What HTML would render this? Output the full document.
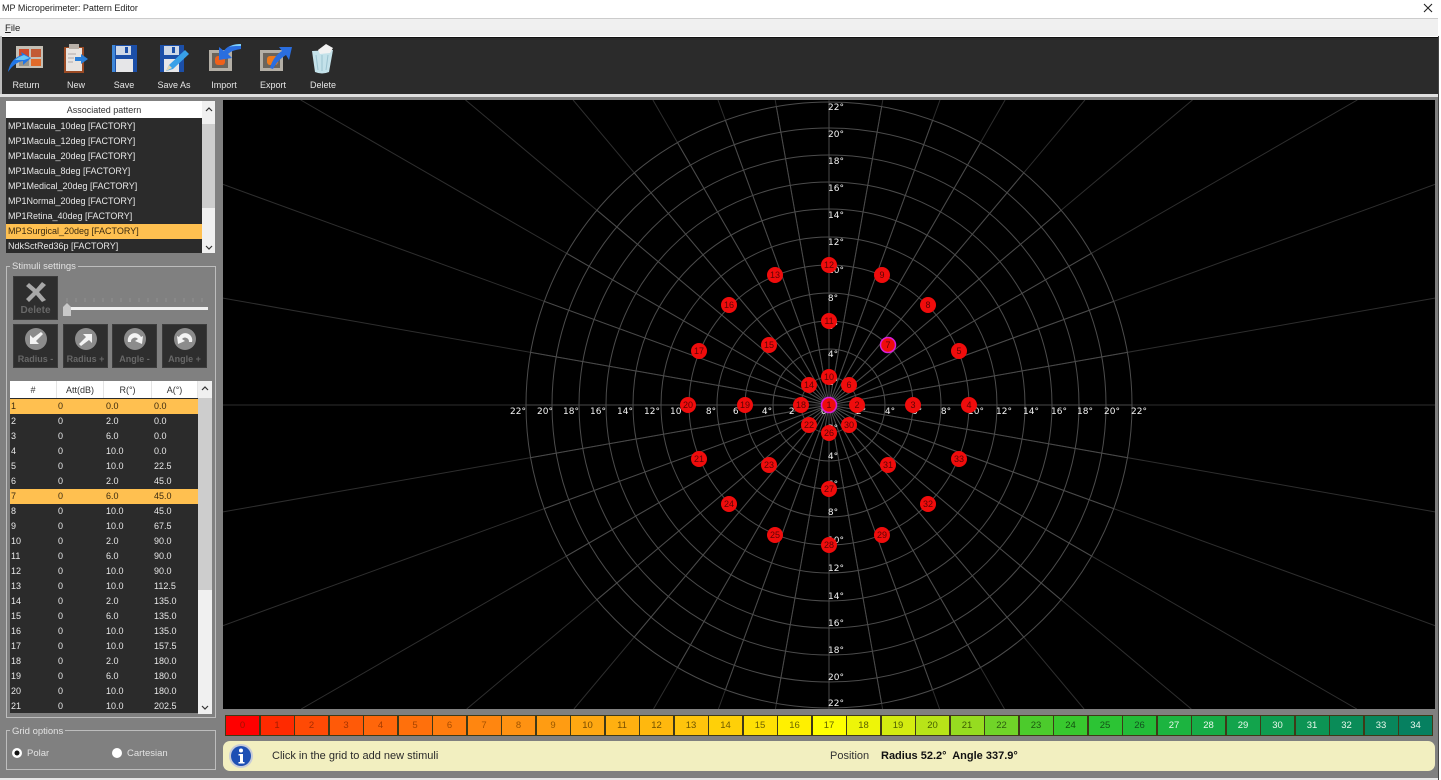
<!DOCTYPE html>
<html><head><meta charset="utf-8"><style>
html,body{margin:0;padding:0;overflow:hidden;width:1441px;height:780px}
body{background:#fff;position:relative;font-family:"Liberation Sans",sans-serif;font-size:9px}
#w{position:absolute;left:0;top:0;width:1441px;height:780px;overflow:hidden}
.a{position:absolute}
.tl{position:absolute;top:80px;color:#e6e6e6;font-size:9px;width:60px;text-align:center;line-height:10px}
.li{position:absolute;left:6px;width:196px;height:15px;line-height:15px;color:#e8e8e8;background:#2b2b2b;padding-left:2px;box-sizing:border-box;white-space:nowrap;overflow:hidden}
.li.s{background:#ffc050;color:#3a2a10}
.r{position:absolute;left:10px;width:188px;height:15px;line-height:15px;background:#2b2b2b;color:#e8e8e8}
.r.s{background:#ffc050;color:#3a2a10}
.r span{position:absolute}
.r span:nth-child(1){left:1px}.r span:nth-child(2){left:48px}.r span:nth-child(3){left:96px}.r span:nth-child(4){left:144px}
.th{position:absolute;top:381px;height:17px;line-height:18px;text-align:center;color:#333;background:#fff;border-right:1px solid #e4e4e4;box-sizing:border-box}
.btn{position:absolute;background:#2e2e2e;border:1px solid #3c3c3c;box-sizing:border-box;width:45px;height:44px}
.bl{position:absolute;left:0;right:0;text-align:center;color:#686868;font-weight:bold;font-size:9px;line-height:10px}
.gb{position:absolute;border:1px solid #bdbdbd;box-sizing:border-box}
.lg{position:absolute;background:#808080;color:#e2e2e2;padding:0 2px;line-height:10px;font-size:9.5px}
.c{position:absolute;top:715px;height:21px;line-height:20px;text-align:center;font-size:9.5px;box-sizing:border-box;border:1px solid #3f3a18;width:35px}
.sb{position:absolute;background:#f0f0f0}
</style></head><body><div id="w">
<div class="a" style="left:2px;top:3px;font-size:9px;line-height:11px;color:#222">MP Microperimeter: Pattern Editor</div>
<svg class="a" style="left:1422px;top:2px" width="12" height="12"><path d="M2 2L10 10M10 2L2 10" stroke="#222" stroke-width="1.1"/></svg>
<div class="a" style="left:0;top:18px;width:1438px;height:18px;background:#f0f0f0;border-top:1px solid #ccc;box-sizing:border-box"></div>
<div class="a" style="left:5px;top:23px;font-size:9.5px;line-height:11px;color:#222"><u>F</u>ile</div>
<div class="a" style="left:2px;top:37px;width:1436px;height:57px;background:#2b2b2b;border-top:1px solid #111"></div>
<div class="a" style="left:0;top:36px;width:2px;height:58px;background:#bbb"></div>
<div class="a" style="left:0;top:94px;width:1438px;height:3px;background:#e0e0e0"></div>
<div class="a" style="left:0;top:97px;width:1438px;height:681px;background:#808080"></div>
<div class="a" style="left:0;top:778px;width:1438px;height:2px;background:#e8e8e8"></div>
<div class="a" style="left:1438px;top:36px;width:1px;height:744px;background:#444"></div>

<!-- toolbar icons -->
<svg class="a" style="left:0;top:38px;filter:blur(.35px)" width="345" height="40" viewBox="0 38 345 40">
 <rect x="16" y="46" width="27" height="22" fill="#c4bfb5"/>
 <rect x="19" y="49" width="10" height="8" fill="#cf4a2a"/><rect x="31" y="49" width="10" height="8" fill="#c25a34"/>
 <rect x="19" y="59" width="10" height="7" fill="#9a958a"/><rect x="31" y="59" width="10" height="7" fill="#e06a2a"/>
 <path d="M8 72C10 62 15 57 22 55L21 52L31 58L23 65L23 61C17 62 12 66 8 72Z" fill="#2276e6"/>
 <path d="M15 60C18 57 22 56 24 55L30 58L24 60Z" fill="#6cc8f4"/>

 <rect x="64" y="47" width="20" height="26" fill="#9a4a24"/><rect x="66" y="48" width="16" height="23" fill="#e8e4e0"/>
 <rect x="69" y="44" width="10" height="5" fill="#b8b0a8"/>
 <path d="M68 54h8M68 58h6M68 62h5" stroke="#b0a8a8"/>
 <path d="M75 57h6v-3l7 5-7 5v-3h-6z" fill="#2a7fd8"/>

 <rect x="112" y="45" width="25" height="27" fill="#1c4fa8"/><rect x="116" y="46" width="15" height="9" fill="#cfd8e6"/><rect x="125" y="47" width="3" height="6" fill="#1c4fa8"/>
 <rect x="116" y="59" width="17" height="13" fill="#e6e6e8"/><rect x="112" y="45" width="3" height="27" fill="#3f87d8"/>

 <rect x="160" y="45" width="24" height="27" fill="#1c4fa8"/><rect x="164" y="46" width="15" height="9" fill="#cfd8e6"/><rect x="172" y="47" width="3" height="6" fill="#1c4fa8"/>
 <rect x="164" y="59" width="15" height="13" fill="#e6e6e8"/>
 <path d="M166 71l3-6 16-15 4 4-16 15z" fill="#38a0e8"/><path d="M166 71l3-6 3 3z" fill="#e8d8b0"/>

 <rect x="209" y="50" width="23" height="21" fill="#b4afa6"/><rect x="212" y="53" width="16" height="15" fill="#6a645c"/><rect x="215" y="56" width="10" height="9" rx="3" fill="#f0601a"/>
 <path d="M241 44C232 44 226 47 224 51L219 47L219 60L232 58L228 54C231 51 235 50 241 49Z" fill="#2a6ee0"/>
 <path d="M229 47C232 45 236 44 241 44V46C236 46 232 46 229 47Z" fill="#7fd0f8"/>

 <rect x="260" y="50" width="23" height="21" fill="#b4afa6"/><rect x="263" y="53" width="17" height="15" fill="#6a645c"/><rect x="267" y="56" width="11" height="9" rx="3" fill="#f07a1a"/>
 <path d="M270 68C272 60 277 54 282 51L279 47L292 47L289 60L286 55C281 58 276 63 273 69Z" fill="#2a6ee0"/>

 <path d="M312 51L333 50L329 72Q322 75 315 72Z" fill="#c4e2ea"/>
 <path d="M316 55l2 15M322 55v16M328 55l-2 15" stroke="#9cc4d0" stroke-width="1"/>
 <path d="M318 50L326 44L333 48L330 53L320 54Z" fill="#f2f2f2"/>
</svg>
<div class="tl" style="left:-4px">Return</div>
<div class="tl" style="left:46px">New</div>
<div class="tl" style="left:94px">Save</div>
<div class="tl" style="left:144px">Save As</div>
<div class="tl" style="left:194px">Import</div>
<div class="tl" style="left:243px">Export</div>
<div class="tl" style="left:293px">Delete</div>

<!-- pattern list -->
<div class="a" style="left:6px;top:101px;width:196px;height:17px;line-height:18px;background:#fff;text-align:center;color:#333">Associated pattern</div>
<div class="a" style="left:6px;top:118px;width:196px;height:135px;background:#2b2b2b"></div>
<div class="li" style="top:119px">MP1Macula_10deg [FACTORY]</div>
<div class="li" style="top:134px">MP1Macula_12deg [FACTORY]</div>
<div class="li" style="top:149px">MP1Macula_20deg [FACTORY]</div>
<div class="li" style="top:164px">MP1Macula_8deg [FACTORY]</div>
<div class="li" style="top:179px">MP1Medical_20deg [FACTORY]</div>
<div class="li" style="top:194px">MP1Normal_20deg [FACTORY]</div>
<div class="li" style="top:209px">MP1Retina_40deg [FACTORY]</div>
<div class="li s" style="top:224px">MP1Surgical_20deg [FACTORY]</div>
<div class="li" style="top:239px;height:14px">NdkSctRed36p [FACTORY]</div>
<div class="sb" style="left:202px;top:101px;width:13px;height:152px"></div>
<div class="a" style="left:202px;top:124px;width:13px;height:84px;background:#cdcdcd"></div>
<svg class="a" style="left:202px;top:101px" width="13" height="152"><path d="M4 10l3-3 3 3M4 145l3 3 3-3" fill="none" stroke="#333" stroke-width="1.2"/></svg>

<!-- stimuli -->
<div class="gb" style="left:6px;top:266px;width:210px;height:452px"></div>
<div class="lg" style="left:10px;top:262px">Stimuli settings</div>
<div class="btn" style="left:13px;top:276px"><svg class="a" style="left:9px;top:4px" width="26" height="22"><path d="M6 2L13 8L19 1L23 4L16 11L23 19L19 21L13 14L6 21L3 18L10 11L3 5Z" fill="#a8a8a8"/></svg><div class="bl" style="top:29px;font-size:10px">Delete</div></div>
<svg class="a" style="left:62px;top:296px" width="150" height="22">
 <path d="M5 2v4M14 2v4M23 2v4M32 2v4M41 2v4M50 2v4M59 2v4M68 2v4M77 2v4M86 2v4M95 2v4M104 2v4M113 2v4M122 2v4M131 2v4M140 2v4" stroke="#8f8f8f" stroke-width="1"/>
 <rect x="3" y="11" width="143" height="3" fill="#f0f0f0"/>
 <path d="M1 11L5 7L9 11V20H1Z" fill="#c8c8c8"/>
</svg>
<div class="btn" style="left:13px;top:324px"><svg class="a" style="left:10px;top:2px" width="24" height="24"><circle cx="12" cy="12" r="11" fill="#8c8c8c"/><path d="M17 5L19 7L12 14L15 17H6V8L9 11Z" fill="#f4f4f4"/></svg><div class="bl" style="top:29px">Radius -</div></div>
<div class="btn" style="left:63px;top:324px"><svg class="a" style="left:10px;top:2px" width="24" height="24"><circle cx="12" cy="12" r="11" fill="#8c8c8c"/><path d="M7 19L5 17L12 10L9 7H18V16L15 13Z" fill="#f4f4f4"/></svg><div class="bl" style="top:29px">Radius +</div></div>
<div class="btn" style="left:112px;top:324px"><svg class="a" style="left:10px;top:2px" width="24" height="24"><circle cx="12" cy="12" r="11" fill="#8c8c8c"/><path d="M5 15A7 7 0 0 1 18 10L20 9L19 17L12 14L15 12A4 4 0 0 0 8 15Z" fill="#f4f4f4"/></svg><div class="bl" style="top:29px">Angle -</div></div>
<div class="btn" style="left:162px;top:324px"><svg class="a" style="left:10px;top:2px" width="24" height="24"><circle cx="12" cy="12" r="11" fill="#8c8c8c"/><path d="M19 15A7 7 0 0 0 6 10L4 9L5 17L12 14L9 12A4 4 0 0 1 16 15Z" fill="#f4f4f4"/></svg><div class="bl" style="top:29px">Angle +</div></div>

<!-- table -->
<div class="th" style="left:10px;width:47px">#</div>
<div class="th" style="left:57px;width:47px">Att(dB)</div>
<div class="th" style="left:104px;width:48px">R(°)</div>
<div class="th" style="left:152px;width:46px">A(°)</div>
<div class="a" style="left:10px;top:398px;width:188px;height:315px;background:#2b2b2b"></div>
<div class="r s" style="top:399px"><span>1</span><span>0</span><span>0.0</span><span>0.0</span></div>
<div class="r" style="top:414px"><span>2</span><span>0</span><span>2.0</span><span>0.0</span></div>
<div class="r" style="top:429px"><span>3</span><span>0</span><span>6.0</span><span>0.0</span></div>
<div class="r" style="top:444px"><span>4</span><span>0</span><span>10.0</span><span>0.0</span></div>
<div class="r" style="top:459px"><span>5</span><span>0</span><span>10.0</span><span>22.5</span></div>
<div class="r" style="top:474px"><span>6</span><span>0</span><span>2.0</span><span>45.0</span></div>
<div class="r s" style="top:489px"><span>7</span><span>0</span><span>6.0</span><span>45.0</span></div>
<div class="r" style="top:504px"><span>8</span><span>0</span><span>10.0</span><span>45.0</span></div>
<div class="r" style="top:519px"><span>9</span><span>0</span><span>10.0</span><span>67.5</span></div>
<div class="r" style="top:534px"><span>10</span><span>0</span><span>2.0</span><span>90.0</span></div>
<div class="r" style="top:549px"><span>11</span><span>0</span><span>6.0</span><span>90.0</span></div>
<div class="r" style="top:564px"><span>12</span><span>0</span><span>10.0</span><span>90.0</span></div>
<div class="r" style="top:579px"><span>13</span><span>0</span><span>10.0</span><span>112.5</span></div>
<div class="r" style="top:594px"><span>14</span><span>0</span><span>2.0</span><span>135.0</span></div>
<div class="r" style="top:609px"><span>15</span><span>0</span><span>6.0</span><span>135.0</span></div>
<div class="r" style="top:624px"><span>16</span><span>0</span><span>10.0</span><span>135.0</span></div>
<div class="r" style="top:639px"><span>17</span><span>0</span><span>10.0</span><span>157.5</span></div>
<div class="r" style="top:654px"><span>18</span><span>0</span><span>2.0</span><span>180.0</span></div>
<div class="r" style="top:669px"><span>19</span><span>0</span><span>6.0</span><span>180.0</span></div>
<div class="r" style="top:684px"><span>20</span><span>0</span><span>10.0</span><span>180.0</span></div>
<div class="r" style="top:699px;height:14px"><span>21</span><span>0</span><span>10.0</span><span>202.5</span></div>
<div class="sb" style="left:198px;top:381px;width:14px;height:333px"></div>
<div class="a" style="left:198px;top:398px;width:14px;height:192px;background:#cdcdcd"></div>
<svg class="a" style="left:198px;top:381px" width="14" height="333"><path d="M4 9l3-3 3 3M4 325l3 3 3-3" fill="none" stroke="#333" stroke-width="1.2"/></svg>

<!-- grid options -->
<div class="gb" style="left:6px;top:730px;width:210px;height:40px"></div>
<div class="lg" style="left:10px;top:727px">Grid options</div>
<svg class="a" style="left:10px;top:746px" width="120" height="14"><circle cx="7" cy="7" r="5" fill="#fff"/><circle cx="7" cy="7" r="2.5" fill="#111"/><circle cx="107" cy="7" r="5" fill="#fff"/></svg>
<div class="a" style="left:27px;top:749px;color:#e2e2e2;line-height:10px;font-size:9.5px">Polar</div>
<div class="a" style="left:127px;top:749px;color:#e2e2e2;line-height:10px;font-size:9.5px">Cartesian</div>

<!-- canvas -->
<svg class="a" style="left:223px;top:100px;background:#000" width="1212" height="609" viewBox="223 100 1212 609">
<defs>
<clipPath id="cp"><circle cx="829" cy="405" r="303"/></clipPath>
<path id="sp" fill="none" d="M223 405L1435 405M223 298.100L1435 511.900M223 511.900L1435 298.100M223 184.400L1435 625.600M223 625.600L1435 184.400M300.700 100L1356.800 709M1357.300 100L301.200 709M465.500 100L1191.300 709M1192.500 100L466.700 709M573.100 100L1084.100 709M1084.900 100L573.900 709M652.900 100L1004.500 709M1005.100 100L653.500 709M718 100L939.600 709M940 100L718.400 709M775.200 100L882.600 709M882.800 100L775.400 709M829 100L829 709"/>
</defs>
<use href="#sp" stroke="#2e2e2e" stroke-width="1"/>
<g clip-path="url(#cp)"><use href="#sp" stroke="#4a4a4a" stroke-width="1"/></g>
<g fill="none" stroke="#4c4c4c" stroke-width="1">
<circle cx="829" cy="405" r="28"/><circle cx="829" cy="405" r="56"/><circle cx="829" cy="405" r="84"/><circle cx="829" cy="405" r="112"/><circle cx="829" cy="405" r="140"/><circle cx="829" cy="405" r="168"/><circle cx="829" cy="405" r="196"/><circle cx="829" cy="405" r="223"/><circle cx="829" cy="405" r="250"/><circle cx="829" cy="405" r="277"/><circle cx="829" cy="405" r="303"/>
</g>
<g font-family="'DejaVu Sans',sans-serif" font-size="9" fill="#f2f2f2" text-anchor="middle">
<text x="836" y="110">22°</text><text x="836" y="137">20°</text><text x="836" y="164">18°</text><text x="836" y="191">16°</text><text x="836" y="218">14°</text><text x="836" y="245">12°</text><text x="836" y="273">10°</text><text x="833" y="301">8°</text><text x="833" y="329">6°</text><text x="833" y="357">4°</text><text x="833" y="385">2°</text>
<text x="833" y="431">2°</text><text x="833" y="459">4°</text><text x="833" y="487">6°</text><text x="833" y="515">8°</text><text x="836" y="543">10°</text><text x="836" y="571">12°</text><text x="836" y="599">14°</text><text x="836" y="626">16°</text><text x="836" y="653">18°</text><text x="836" y="680">20°</text><text x="836" y="706">22°</text>
<text x="518" y="414">22°</text><text x="545" y="414">20°</text><text x="571" y="414">18°</text><text x="598" y="414">16°</text><text x="625" y="414">14°</text><text x="652" y="414">12°</text><text x="678" y="414">10°</text><text x="711" y="414">8°</text><text x="738" y="414">6°</text><text x="767" y="414">4°</text><text x="794" y="414">2°</text><text x="826" y="414">0°</text>
<text x="861" y="414">2°</text><text x="890" y="414">4°</text><text x="917" y="414">6°</text><text x="946" y="414">8°</text><text x="976" y="414">10°</text><text x="1004" y="414">12°</text><text x="1031" y="414">14°</text><text x="1059" y="414">16°</text><text x="1085" y="414">18°</text><text x="1112" y="414">20°</text><text x="1139" y="414">22°</text>
</g>
<g fill="#f00c0c">
<circle cx="829" cy="405" r="7.500" stroke="#d81fd8" stroke-width="1.500"/><circle cx="857" cy="405" r="8"/><circle cx="913" cy="405" r="8"/><circle cx="969" cy="405" r="8"/><circle cx="959" cy="351" r="8"/><circle cx="849" cy="385" r="8"/><circle cx="888" cy="345" r="7.500" stroke="#d81fd8" stroke-width="1.500"/><circle cx="928" cy="305" r="8"/><circle cx="882" cy="275" r="8"/><circle cx="829" cy="377" r="8"/><circle cx="829" cy="321" r="8"/><circle cx="829" cy="265" r="8"/><circle cx="775" cy="275" r="8"/><circle cx="809" cy="385" r="8"/><circle cx="769" cy="345" r="8"/><circle cx="729" cy="305" r="8"/><circle cx="699" cy="351" r="8"/><circle cx="801" cy="405" r="8"/><circle cx="745" cy="405" r="8"/><circle cx="688" cy="405" r="8"/><circle cx="699" cy="459" r="8"/><circle cx="809" cy="425" r="8"/><circle cx="769" cy="465" r="8"/><circle cx="729" cy="504" r="8"/><circle cx="775" cy="535" r="8"/><circle cx="829" cy="433" r="8"/><circle cx="829" cy="489" r="8"/><circle cx="829" cy="545" r="8"/><circle cx="882" cy="535" r="8"/><circle cx="849" cy="425" r="8"/><circle cx="888" cy="465" r="8"/><circle cx="928" cy="504" r="8"/><circle cx="959" cy="459" r="8"/>
</g>
<g font-family="'Liberation Sans',sans-serif" font-size="9" fill="#5c0404" text-anchor="middle">
<text x="829" y="408">1</text><text x="857" y="408">2</text><text x="913" y="408">3</text><text x="969" y="408">4</text><text x="959" y="354">5</text><text x="849" y="388">6</text><text x="888" y="348">7</text><text x="928" y="308">8</text><text x="882" y="278">9</text><text x="829" y="380">10</text><text x="829" y="324">11</text><text x="829" y="268">12</text><text x="775" y="278">13</text><text x="809" y="388">14</text><text x="769" y="348">15</text><text x="729" y="308">16</text><text x="699" y="354">17</text><text x="801" y="408">18</text><text x="745" y="408">19</text><text x="688" y="408">20</text><text x="699" y="462">21</text><text x="809" y="428">22</text><text x="769" y="468">23</text><text x="729" y="507">24</text><text x="775" y="538">25</text><text x="829" y="436">26</text><text x="829" y="492">27</text><text x="829" y="548">28</text><text x="882" y="538">29</text><text x="849" y="428">30</text><text x="888" y="468">31</text><text x="928" y="507">32</text><text x="959" y="462">33</text>
</g>
</svg>

<!-- legend -->
<div class="c" style="left:225px;background:#ff0000;color:#a01000">0</div>
<div class="c" style="left:259.5px;background:#ff2a00;color:#a01c00">1</div>
<div class="c" style="left:294px;background:#ff4a05;color:#a82c00">2</div>
<div class="c" style="left:328.5px;background:#ff5a08;color:#a83400">3</div>
<div class="c" style="left:363px;background:#ff660a;color:#a83c00">4</div>
<div class="c" style="left:397.5px;background:#ff700c;color:#a84400">5</div>
<div class="c" style="left:432px;background:#ff7c0e;color:#a84c00">6</div>
<div class="c" style="left:466.5px;background:#ff8610;color:#a45000">7</div>
<div class="c" style="left:501px;background:#ff9212;color:#a05400">8</div>
<div class="c" style="left:535.5px;background:#ff9c12;color:#985800">9</div>
<div class="c" style="left:570px;background:#ffa812;color:#7a4c00">10</div>
<div class="c" style="left:604.5px;background:#ffb010;color:#7a5000">11</div>
<div class="c" style="left:639px;background:#ffb80e;color:#6e5000">12</div>
<div class="c" style="left:673.5px;background:#ffc40c;color:#6e5400">13</div>
<div class="c" style="left:708px;background:#ffd008;color:#6e5a00">14</div>
<div class="c" style="left:742.5px;background:#ffe004;color:#6e6000">15</div>
<div class="c" style="left:777px;background:#fff000;color:#6e6800">16</div>
<div class="c" style="left:811.5px;background:#ffff00;color:#606000">17</div>
<div class="c" style="left:846px;background:#eef508;color:#5a6000">18</div>
<div class="c" style="left:880.5px;background:#d4ec10;color:#506000">19</div>
<div class="c" style="left:915px;background:#b8e418;color:#466000">20</div>
<div class="c" style="left:949.5px;background:#96dc20;color:#3c5c00">21</div>
<div class="c" style="left:984px;background:#70d428;color:#2c5c10">22</div>
<div class="c" style="left:1018.5px;background:#4ccb2c;color:#1c5810">23</div>
<div class="c" style="left:1053px;background:#38c82e;color:#145010">24</div>
<div class="c" style="left:1087.5px;background:#2cc434;color:#145018">25</div>
<div class="c" style="left:1122px;background:#22bc38;color:#145020">26</div>
<div class="c" style="left:1156.5px;background:#1cb440;color:#e8f8ec">27</div>
<div class="c" style="left:1191px;background:#16ac46;color:#e8f8ec">28</div>
<div class="c" style="left:1225.5px;background:#12a44c;color:#e8f8ec">29</div>
<div class="c" style="left:1260px;background:#0e9c50;color:#e8f8ec">30</div>
<div class="c" style="left:1294.5px;background:#0c9454;color:#e8f8ec">31</div>
<div class="c" style="left:1329px;background:#0a8c58;color:#e8f8ec">32</div>
<div class="c" style="left:1363.5px;background:#08865c;color:#e8f8ec">33</div>
<div class="c" style="left:1398px;background:#068060;color:#e8f8ec">34</div>

<!-- info bar -->
<div class="a" style="left:223px;top:741px;width:1212px;height:30px;background:#f2efc0;border-radius:7px"></div>
<svg class="a" style="left:228px;top:743px" width="26" height="26"><circle cx="13" cy="13" r="12" fill="#c8ccd8"/><circle cx="13" cy="13" r="10" fill="#1d4fb4"/><circle cx="13" cy="7.500" r="2" fill="#fff"/><path d="M10.500 11h4.500v8h1.500v1.500h-6V19h1.500v-6.500h-1.500z" fill="#fff"/></svg>
<div class="a" style="left:272px;top:749px;font-size:11px;line-height:14px;color:#2a2a2a">Click in the grid to add new stimuli</div>
<div class="a" style="left:830px;top:749px;font-size:11px;line-height:14px;color:#333">Position</div>
<div class="a" style="left:881px;top:749px;font-size:11px;line-height:14px;color:#111;font-weight:bold">Radius 52.2°&nbsp; Angle 337.9°</div>
</div></body></html>
